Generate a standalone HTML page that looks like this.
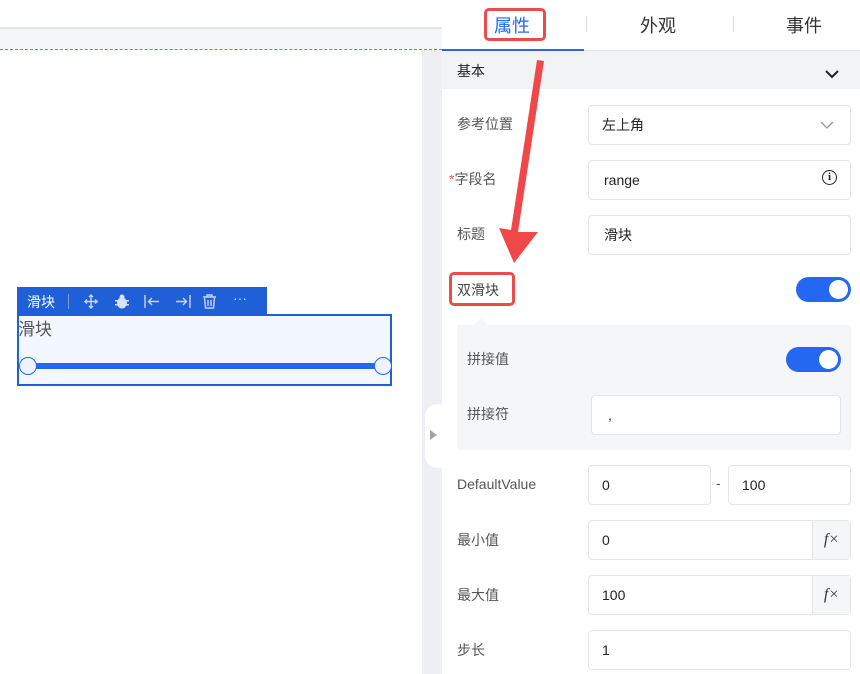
<!DOCTYPE html>
<html><head><meta charset="utf-8"><style>
*{box-sizing:border-box;margin:0;padding:0}
body{width:860px;height:674px;overflow:hidden;background:#fff;font-family:"Liberation Sans","Noto Sans CJK SC",sans-serif;position:relative;font-size:14px;color:#333}
.a{position:absolute}
.lbl{position:absolute;left:457px;font-size:14px;color:#555}
.inp{position:absolute;background:#fff;border:1px solid #e3e5e8;border-radius:4px;font-size:14px;color:#222;padding-left:13px;display:flex;align-items:center}
.tog{position:absolute;width:55px;height:25px;border-radius:13px;background:#2468f2}
.tog:after{content:"";position:absolute;right:3px;top:3px;width:19px;height:19px;border-radius:50%;background:#fff}
.fx{position:absolute;right:0;top:0;bottom:0;width:38px;background:#f5f6f8;border-left:1px solid #e3e5e8;display:flex;align-items:center;justify-content:center;font-family:"Liberation Serif",serif;font-style:italic;font-size:16px;color:#333}
</style></head><body>
<div class="a" style="left:0;top:27px;width:442px;height:2px;background:#e6e7ea"></div>
<div class="a" style="left:0;top:29px;width:442px;height:20px;background:#f5f6f8"></div>
<div class="a" style="left:0;top:49px;width:442px;border-top:1px dashed #5b83e0"></div>
<div class="a" style="left:422px;top:50px;width:20px;height:624px;background:#eeeff2"></div>
<div class="a" style="left:425px;top:404px;width:20px;height:64px;background:#fff;border-radius:12px 0 0 12px"></div>
<div class="a" style="left:430px;top:430px;width:0;height:0;border-left:7px solid #a0a4ad;border-top:5px solid transparent;border-bottom:5px solid transparent"></div>

<!-- component -->
<div class="a" style="left:17px;top:287px;width:250px;height:28px;background:#1f5fd8;color:#fff;font-size:14px">
<span class="a" style="left:10px;top:5px">滑块</span>
<span class="a" style="left:51px;top:7px;width:1px;height:15px;background:#7a9de6"></span>
<svg class="a" style="left:67px;top:7px" width="150" height="15" fill="none" stroke="#c8d7f7" stroke-width="1.4">
<path d="M7 1v13M1 7.5h13M5 3l2-2 2 2M5 12l2 2 2-2M3 5.5l-2 2 2 2M11 5.5l2 2-2 2"/>
<g fill="#d8e2f8" stroke="none"><ellipse cx="38" cy="9" rx="5" ry="5.5"/><circle cx="38" cy="3" r="2.5"/><rect x="31" y="6" width="14" height="1.5"/><rect x="31" y="10" width="14" height="1.5"/></g>
<path d="M61 1v13M64 7.5h11M68 4l-3.5 3.5L68 11"/>
<path d="M106 1v13M92 7.5h11M99 4l3.5 3.5L99 11"/>
<path d="M119 3h13M123 3V1h5v2M120.5 4l1 10h8l1-10M124 6v6M127 6v6"/>
</svg>
<span class="a" style="left:216px;top:3px;color:#d0ddf7">···</span>
</div>
<div class="a" style="left:17px;top:314px;width:375px;height:72px;border:2px solid #1f5fd8;background:#f3f7ff"></div>
<div class="a" style="left:18px;top:315px;font-size:17px;color:#555">滑块</div>
<div class="a" style="left:28px;top:363px;width:355px;height:6px;background:#2468f2"></div>
<div class="a" style="left:19px;top:357px;width:18px;height:18px;border-radius:50%;background:#eef3ff;border:1.5px solid #2468f2"></div>
<div class="a" style="left:374px;top:357px;width:18px;height:18px;border-radius:50%;background:#eef3ff;border:1.5px solid #2468f2"></div>

<!-- tabs -->
<div class="a" style="left:442px;top:0;width:418px;height:51px;border-bottom:1px solid #e6e7ea"></div>
<div class="a" style="left:442px;top:49px;width:142px;height:2px;background:#2468f2"></div>
<div class="a" style="left:494px;top:12px;font-size:18px;color:#2468f2">属性</div>
<div class="a" style="left:640px;top:12px;font-size:18px;color:#333">外观</div>
<div class="a" style="left:786px;top:12px;font-size:18px;color:#333">事件</div>
<div class="a" style="left:586px;top:16px;width:1px;height:16px;background:#ddd"></div>
<div class="a" style="left:733px;top:16px;width:1px;height:16px;background:#ddd"></div>
<div class="a" style="left:484px;top:8px;width:62px;height:33px;border:3px solid #ec4b4b;border-radius:5px"></div>

<div class="a" style="left:442px;top:51px;width:418px;height:38px;background:#f2f3f5"></div>
<div class="a" style="left:457px;top:61px;font-size:14px;color:#222">基本</div>
<svg class="a" style="left:824px;top:69px" width="16" height="10"><path d="M2 2l6 6 6-6" stroke="#222" stroke-width="2" fill="none"/></svg>

<div class="lbl" style="top:114px">参考位置</div>
<div class="inp" style="left:588px;top:105px;width:263px;height:40px">左上角</div>
<svg class="a" style="left:820px;top:121px" width="14" height="9"><path d="M1 1l6 6 6-6" stroke="#999" stroke-width="1.3" fill="none"/></svg>
<div class="lbl" style="top:169px;left:449px"><span style="color:#e54">*</span>字段名</div>
<div class="inp" style="left:588px;top:160px;width:263px;height:40px;padding-left:15px">range</div>
<div class="a" style="left:822px;top:170px;width:15px;height:15px;border:1.5px solid #222;border-radius:50%;font-size:11px;font-weight:bold;text-align:center;line-height:12px;color:#222;font-family:'Liberation Serif',serif">i</div>
<div class="lbl" style="top:224px">标题</div>
<div class="inp" style="left:588px;top:215px;width:263px;height:40px;padding-left:15px">滑块</div>
<div class="lbl" style="top:280px;color:#444">双滑块</div>
<div class="a" style="left:449px;top:272px;width:66px;height:34px;border:3px solid #ec4b4b;border-radius:5px"></div>
<div class="tog" style="left:796px;top:277px"></div>

<div class="a" style="left:457px;top:325px;width:394px;height:125px;background:#f5f6f8"></div>
<div class="a" style="left:474px;top:318px;width:0;height:0;border-left:7px solid transparent;border-right:7px solid transparent;border-bottom:7px solid #f5f6f8"></div>
<div class="lbl" style="top:349px;left:467px">拼接值</div>
<div class="tog" style="left:786px;top:347px"></div>
<div class="lbl" style="top:404px;left:467px">拼接符</div>
<div class="inp" style="left:591px;top:395px;width:250px;height:40px;padding-left:16px">,</div>

<div class="lbl" style="top:476px">DefaultValue</div>
<div class="inp" style="left:588px;top:465px;width:123px;height:40px">0</div>
<div class="a" style="left:716px;top:475px;color:#555">-</div>
<div class="inp" style="left:728px;top:465px;width:123px;height:40px">100</div>
<div class="lbl" style="top:530px">最小值</div>
<div class="inp" style="left:588px;top:520px;width:263px;height:40px">0<div class="fx">f×</div></div>
<div class="lbl" style="top:585px">最大值</div>
<div class="inp" style="left:588px;top:575px;width:263px;height:40px">100<div class="fx">f×</div></div>
<div class="lbl" style="top:640px">步长</div>
<div class="inp" style="left:588px;top:630px;width:263px;height:40px">1</div>

<svg class="a" style="left:0;top:0" width="860" height="674"><path d="M537 60 L544 61 L518 232 L538 232 L514 263 L499 228 L511 230 Z" fill="#f04848"/></svg>
</body></html>
